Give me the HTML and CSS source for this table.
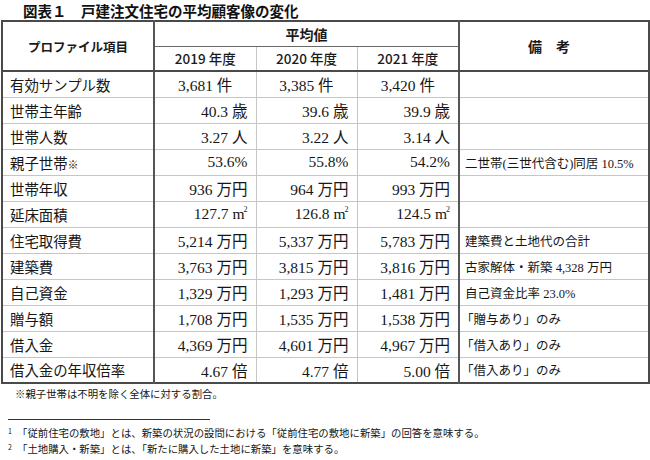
FILE: index.html
```html
<!DOCTYPE html>
<html lang="ja">
<head>
<meta charset="utf-8">
<title>図表1 戸建注文住宅の平均顧客像の変化</title>
<link rel="stylesheet" href="styles.css">
</head>
<body>
<div class="page">
  <h1 class="title">図表１　戸建注文住宅の平均顧客像の変化</h1>
  <table class="profile">
    <colgroup>
      <col class="c-item"><col class="c-year"><col class="c-year-mid"><col class="c-year"><col class="c-note">
    </colgroup>
    <thead>
      <tr class="hrow1">
        <th rowspan="2" class="th-item">プロファイル項目</th>
        <th colspan="3" class="th-avg">平均値</th>
        <th rowspan="2" class="th-note">備　考</th>
      </tr>
      <tr class="hrow2">
        <th class="th-year">2019 年度</th>
        <th class="th-year">2020 年度</th>
        <th class="th-year th-year-last">2021 年度</th>
      </tr>
    </thead>
    <tbody>
      <tr class="row row-center"><td class="label">有効サンプル数</td><td class="val">3,681 件</td><td class="val">3,385 件</td><td class="val val-last">3,420 件</td><td class="note"></td></tr>
      <tr class="row"><td class="label">世帯主年齢</td><td class="val">40.3 歳</td><td class="val">39.6 歳</td><td class="val val-last">39.9 歳</td><td class="note"></td></tr>
      <tr class="row"><td class="label">世帯人数</td><td class="val">3.27 人</td><td class="val">3.22 人</td><td class="val val-last">3.14 人</td><td class="note"></td></tr>
      <tr class="row"><td class="label">親子世帯<span class="mark">※</span></td><td class="val">53.6%</td><td class="val">55.8%</td><td class="val val-last">54.2%</td><td class="note">二世帯(三世代含む)同居 10.5%</td></tr>
      <tr class="row"><td class="label">世帯年収</td><td class="val">936 万円</td><td class="val">964 万円</td><td class="val val-last">993 万円</td><td class="note"></td></tr>
      <tr class="row"><td class="label">延床面積</td><td class="val">127.7 <span class="sq">m<span class="sq-2">2</span></span></td><td class="val">126.8 <span class="sq">m<span class="sq-2">2</span></span></td><td class="val val-last">124.5 <span class="sq">m<span class="sq-2">2</span></span></td><td class="note"></td></tr>
      <tr class="row"><td class="label">住宅取得費</td><td class="val">5,214 万円</td><td class="val">5,337 万円</td><td class="val val-last">5,783 万円</td><td class="note">建築費と土地代の合計</td></tr>
      <tr class="row"><td class="label">建築費</td><td class="val">3,763 万円</td><td class="val">3,815 万円</td><td class="val val-last">3,816 万円</td><td class="note">古家解体・新築 4,328 万円</td></tr>
      <tr class="row"><td class="label">自己資金</td><td class="val">1,329 万円</td><td class="val">1,293 万円</td><td class="val val-last">1,481 万円</td><td class="note">自己資金比率 23.0%</td></tr>
      <tr class="row"><td class="label">贈与額</td><td class="val">1,708 万円</td><td class="val">1,535 万円</td><td class="val val-last">1,538 万円</td><td class="note note-br">「贈与あり」のみ</td></tr>
      <tr class="row"><td class="label">借入金</td><td class="val">4,369 万円</td><td class="val">4,601 万円</td><td class="val val-last">4,967 万円</td><td class="note note-br">「借入あり」のみ</td></tr>
      <tr class="row"><td class="label">借入金の年収倍率</td><td class="val">4.67 倍</td><td class="val">4.77 倍</td><td class="val val-last">5.00 倍</td><td class="note note-br">「借入あり」のみ</td></tr>
    </tbody>
  </table>
  <p class="remark">※親子世帯は不明を除く全体に対する割合。</p>
  <div class="rule"></div>
  <ol class="footnotes">
    <li class="fn"><span class="fn-num">1</span><span class="fn-text">「従前住宅の敷地」とは、新築の状況の設問における「従前住宅の敷地に新築」の回答を意味する。</span></li>
    <li class="fn"><span class="fn-num">2</span><span class="fn-text">「土地購入・新築」とは、「新たに購入した土地に新築」を意味する。</span></li>
  </ol>
</div>
</body>
</html>
```

FILE: styles.css
```css
* { box-sizing: border-box; }
html, body {
  margin: 0;
  padding: 0;
  background: #ffffff;
}
body {
  width: 650px;
  height: 460px;
  overflow: hidden;
  color: #161616;
  font-family: "Liberation Serif", "Noto Sans CJK JP", serif;
}
.page {
  padding: 0 2px 0 1px;
}
.title {
  margin: 0;
  height: 20px;
  padding-left: 22px;
  font-family: "Noto Sans CJK JP", sans-serif;
  font-weight: 700;
  font-size: 14.5px;
  line-height: 21px;
  color: #111;
}
.profile {
  width: 647px;
  table-layout: fixed;
  border-collapse: collapse;
  border: 2px solid #4a4a4a;
}
.c-item { width: 152px; }
.c-year { width: 102px; }
.c-year-mid { width: 101px; }
.c-note { width: 190px; }

.profile th,
.profile td {
  border: 1px solid #c6c6c6;
  padding: 0;
  vertical-align: middle;
}
.profile th {
  font-family: "Noto Sans CJK JP", sans-serif;
  font-weight: 700;
  text-align: center;
  color: #1a1a1a;
}
.hrow1 th, .hrow2 th { height: 25px; }
.profile .th-item {
  font-size: 12.5px;
  border-right: 2px solid #555;
  border-bottom: 2px solid #4a4a4a;
}
.profile .th-avg {
  font-size: 14px;
  border-bottom: 1px solid #6a6a6a;
}
.profile .th-note {
  font-size: 14px;
  border-left: 2px solid #555;
  border-bottom: 2px solid #4a4a4a;
  padding-right: 10px;
}
.profile .th-year {
  font-size: 13.5px;
  font-weight: 500;
  border-bottom: 2px solid #4a4a4a;
}
.profile .th-year-last { border-right: 2px solid #555; }

.row td { height: 26px; }
.profile .label {
  font-family: "Noto Sans CJK JP", sans-serif;
  font-size: 14.4px;
  padding-left: 7px;
  border-right: 2px solid #555;
  white-space: nowrap;
}
.mark { font-size: 11px; }
.profile .val {
  font-size: 15.5px;
  text-align: right;
  padding-right: 8px;
  white-space: nowrap;
}
.profile .row-center .val {
  text-align: center;
  padding-right: 0;
}
.profile .val-last { border-right: 2px solid #555; }
.sq { font-size: 15.5px; }
.sq-2 {
  font-size: 8px;
  vertical-align: 7px;
  margin-left: -1px;
}
.profile .note {
  font-size: 12.5px;
  padding-left: 5px;
  white-space: nowrap;
}
.profile .note-br { padding-left: 1px; }

.remark {
  margin: 0;
  padding-left: 14px;
  font-family: "Noto Sans CJK JP", sans-serif;
  font-size: 10.4px;
  line-height: 20px;
  height: 20px;
}
.rule {
  width: 202px;
  height: 1px;
  margin: 15px 0 0 7px;
  background: #333;
}
.footnotes {
  list-style: none;
  margin: 3px 0 0 0;
  padding: 0;
}
.fn {
  height: 16px;
  padding-left: 7px;
  font-family: "Noto Sans CJK JP", sans-serif;
  font-size: 10.4px;
  line-height: 16px;
  white-space: nowrap;
}
.fn-num {
  display: inline-block;
  width: 9px;
  font-size: 7px;
  vertical-align: 3px;
}
```
